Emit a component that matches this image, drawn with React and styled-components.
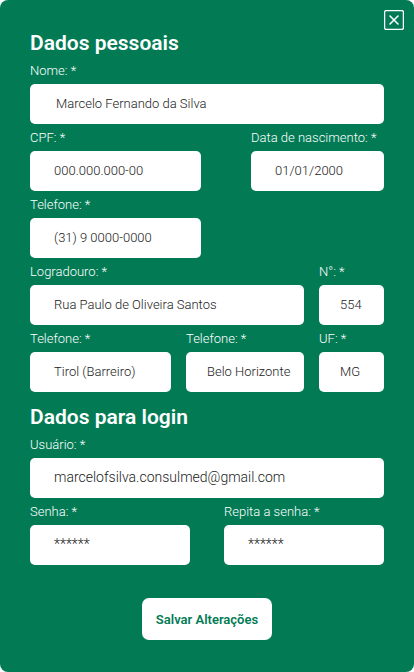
import React, { useId } from 'react';
import styled, { createGlobalStyle } from 'styled-components';

const GlobalStyle = createGlobalStyle`
  *, *::before, *::after { box-sizing: border-box; }
  body {
    margin: 0;
    background: #fff;
    font-family: Roboto, "Liberation Sans", sans-serif;
  }
`;

const Panel = styled.main`
  display: flex;
  flex-direction: column;
  min-height: 100vh;
  padding: 10px 10px 32px;
  border-radius: 8px;
  background: #027b55;
`;

const TopBar = styled.header`
  display: flex;
  justify-content: flex-end;
`;

const CloseButton = styled.button`
  display: flex;
  align-items: center;
  justify-content: center;
  width: 20px;
  height: 20px;
  padding: 0;
  border: 0;
  background: transparent;
  color: #fff;
  cursor: pointer;
`;

const Form = styled.form`
  display: flex;
  flex-direction: column;
  gap: 12px;
  padding: 0 20px;
`;

const Section = styled.section`
  display: flex;
  flex-direction: column;
  gap: 4px;
`;

const Title = styled.h2`
  margin: 0 0 1px;
  color: #fff;
  font-size: 21px;
  font-weight: 600;
  line-height: 26px;
`;

const Row = styled.div`
  display: grid;
  grid-template-columns: ${({ $columns }) => $columns || '1fr'};
  column-gap: ${({ $gap }) => $gap || 15}px;
`;

const FieldGroup = styled.div`
  display: flex;
  flex-direction: column;
  gap: 3px;
  min-width: 0;
`;

const Label = styled.label`
  color: #fff;
  font-size: 13px;
  font-weight: 300;
  line-height: 20px;
  white-space: nowrap;
`;

const Input = styled.input`
  width: 100%;
  height: 40px;
  padding: 0 0 2px ${({ $inset }) => $inset}px;
  border: 0;
  border-radius: 5px;
  background: #fff;
  color: #222;
  font-family: inherit;
  font-size: ${({ $large }) => ($large ? 14 : 13)}px;
  font-weight: 300;
`;

const SaveButton = styled.button`
  align-self: center;
  width: 130px;
  height: 42px;
  margin-top: 21px;
  padding: 0;
  border: 0;
  border-radius: 7px;
  background: #fff;
  color: #027b55;
  font-family: inherit;
  font-size: 13px;
  font-weight: 600;
  white-space: nowrap;
  cursor: pointer;
`;

function Field({ label, value, inset = 24, large = false }) {
  const id = useId();
  return (
    <FieldGroup>
      <Label htmlFor={id}>{label}: *</Label>
      <Input id={id} type="text" required defaultValue={value} $inset={inset} $large={large} />
    </FieldGroup>
  );
}

function CloseIcon() {
  return (
    <svg width="20" height="20" viewBox="0 0 20 20" fill="none" stroke="currentColor" aria-hidden="true">
      <rect x="0.6" y="0.6" width="18.8" height="18.8" rx="1.6" strokeWidth="1.3" />
      <path d="M6 6l8 8M14 6l-8 8" strokeWidth="1.6" strokeLinecap="round" />
    </svg>
  );
}

export default function App() {
  return (
    <>
      <GlobalStyle />
      <Panel>
        <TopBar>
          <CloseButton type="button" aria-label="Fechar">
            <CloseIcon />
          </CloseButton>
        </TopBar>
        <Form onSubmit={(event) => event.preventDefault()}>
          <Section>
            <Title>Dados pessoais</Title>
            <Row>
              <Field label="Nome" value="Marcelo Fernando da Silva" inset={26} />
            </Row>
            <Row $columns="171fr 133fr" $gap={50}>
              <Field label="CPF" value="000.000.000-00" />
              <Field label="Data de nascimento" value="01/01/2000" />
            </Row>
            <Row $columns="171fr 133fr" $gap={50}>
              <Field label="Telefone" value="(31) 9 0000-0000" />
            </Row>
            <Row $columns="274fr 65fr">
              <Field label="Logradouro" value="Rua Paulo de Oliveira Santos" />
              <Field label="N°" value="554" inset={21} />
            </Row>
            <Row $columns="141fr 118fr 65fr">
              <Field label="Telefone" value="Tirol (Barreiro)" />
              <Field label="Telefone" value="Belo Horizonte" inset={21} />
              <Field label="UF" value="MG" inset={21} />
            </Row>
          </Section>
          <Section>
            <Title>Dados para login</Title>
            <Row>
              <Field label="Usuário" value="marcelofsilva.consulmed@gmail.com" large />
            </Row>
            <Row $columns="1fr 1fr" $gap={34}>
              <Field label="Senha" value="******" large />
              <Field label="Repita a senha" value="******" large />
            </Row>
          </Section>
          <SaveButton type="submit">Salvar Alterações</SaveButton>
        </Form>
      </Panel>
    </>
  );
}
